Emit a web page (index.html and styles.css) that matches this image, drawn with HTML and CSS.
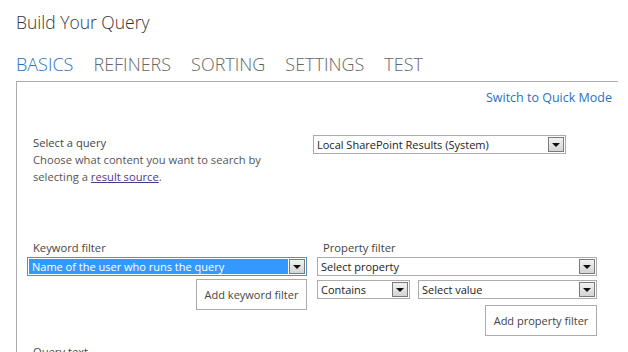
FILE: index.html
```html
<!DOCTYPE html>
<html lang="en">
  <head>
    <meta charset="UTF-8" />
    <title>Build Your Query</title>
    <link rel="stylesheet" href="styles.css">
  </head>
  <body>
    <h1 class="title">Build Your Query</h1>
    <nav class="tabs">
      <span class="tab active">BASICS</span>
      <span class="tab">REFINERS</span>
      <span class="tab">SORTING</span>
      <span class="tab">SETTINGS</span>
      <span class="tab">TEST</span>
    </nav>

    <div class="panel">
      <div class="mode-row">
        <a class="mode-link" href="#">Switch to Quick Mode</a>
      </div>

      <div class="query-row">
        <div class="query-text">
          <div class="label">Select a query</div>
          <div class="hint">
            Choose what content you want to search by<br />
            selecting a <a class="source-link" href="#">result source</a>.
          </div>
        </div>
        <div class="select query-select">
          <span class="value">Local SharePoint Results (System)</span>
          <span class="arrow"></span>
        </div>
      </div>

      <div class="filters">
        <div class="filter-col keyword-col">
          <div class="label">Keyword filter</div>
          <div class="select focused">
            <span class="value">Name of the user who runs the query</span>
            <span class="arrow"></span>
          </div>
          <button class="btn keyword-btn">Add keyword filter</button>
        </div>
        <div class="filter-col property-col">
          <div class="label">Property filter</div>
          <div class="select">
            <span class="value">Select property</span>
            <span class="arrow"></span>
          </div>
          <div class="pair">
            <div class="select op-select">
              <span class="value">Contains</span>
              <span class="arrow"></span>
            </div>
            <div class="select value-select">
              <span class="value">Select value</span>
              <span class="arrow"></span>
            </div>
          </div>
          <button class="btn property-btn">Add property filter</button>
        </div>
      </div>

      <div class="label query-label">Query text</div>
    </div>
  </body>
</html>
```

FILE: styles.css
```css
body {
  margin: 0;
  padding: 0 10px 0 16px;
  font-family: "Open Sans", "Noto Sans", sans-serif;
  color: #444;
  background-color: #fff;
  overflow: hidden;
  height: 352px;
}

.title {
  margin: 0;
  padding-top: 10px;
  font-size: 17.5px;
  font-weight: 300;
  color: #333;
  line-height: 24px;
}

.tabs {
  display: flex;
  gap: 20px;
  margin-top: 19px;
  height: 22px;
}

.tab {
  font-size: 18px;
  font-weight: 300;
  color: #666;
  line-height: 22px;
}

.tab.active {
  color: #2d72b8;
}

.panel {
  margin-top: 6px;
  border-top: 1px solid #ababab;
  border-left: 1px solid #ababab;
  padding-left: 10px;
}

.mode-row {
  display: flex;
  justify-content: flex-end;
  padding: 6px 6px 0 0;
  height: 22px;
}

.mode-link {
  font-size: 12.5px;
  color: #2d6fc0;
  text-decoration: none;
  line-height: 20px;
}

.label {
  font-size: 11.2px;
  color: #444;
  line-height: 16px;
  padding-left: 6px;
}

.query-row {
  display: flex;
  margin-top: 23px;
  height: 107px;
}

.query-text {
  width: 286px;
  padding-top: 2px;
}

.hint {
  font-size: 11.2px;
  color: #555;
  line-height: 17px;
  padding-left: 6px;
}

.source-link {
  color: #4b3a8c;
}

.select {
  display: flex;
  align-items: center;
  box-sizing: border-box;
  height: 19px;
  border: 1px solid #ababab;
  background-color: #fff;
  padding: 1px;
}

.select .value {
  flex: 1;
  font-size: 11px;
  color: #222;
  padding-left: 2px;
  white-space: nowrap;
  overflow: hidden;
  line-height: 15px;
}

.select .arrow {
  position: relative;
  box-sizing: border-box;
  width: 16px;
  height: 15px;
  border: 1px solid #7a7a7a;
  background: linear-gradient(#f2f2f2, #d4d4d4);
}

.select .arrow::after {
  content: "";
  position: absolute;
  left: 3px;
  top: 5px;
  border-left: 4px solid transparent;
  border-right: 4px solid transparent;
  border-top: 4px solid #111;
}

.query-select {
  width: 253px;
  margin-top: 2px;
}

.select.focused {
  border-color: #5a8fc6;
}

.select.focused .value {
  background-color: #3399ff;
  color: #fff;
  padding-left: 3px;
  margin-right: 1px;
}

.filters {
  display: flex;
  gap: 10px;
}

.filter-col {
  display: flex;
  flex-direction: column;
}

.keyword-col {
  width: 280px;
}

.property-col {
  width: 280px;
}

.filter-col .label {
  margin-bottom: 1px;
}

.pair {
  display: flex;
  gap: 8px;
  margin-top: 4px;
}

.op-select {
  width: 93px;
}

.value-select {
  flex: 1;
}

.btn {
  align-self: flex-end;
  height: 31px;
  background-color: #fff;
  border: 1px solid #ababab;
  font-family: "Open Sans", "Noto Sans", sans-serif;
  font-size: 11px;
  color: #444;
  padding: 0;
  white-space: nowrap;
}

.keyword-btn {
  width: 111px;
  margin-top: 3px;
}

.property-btn {
  width: 112px;
  margin-top: 6px;
}

.query-label {
  margin-top: 8px;
}
```
